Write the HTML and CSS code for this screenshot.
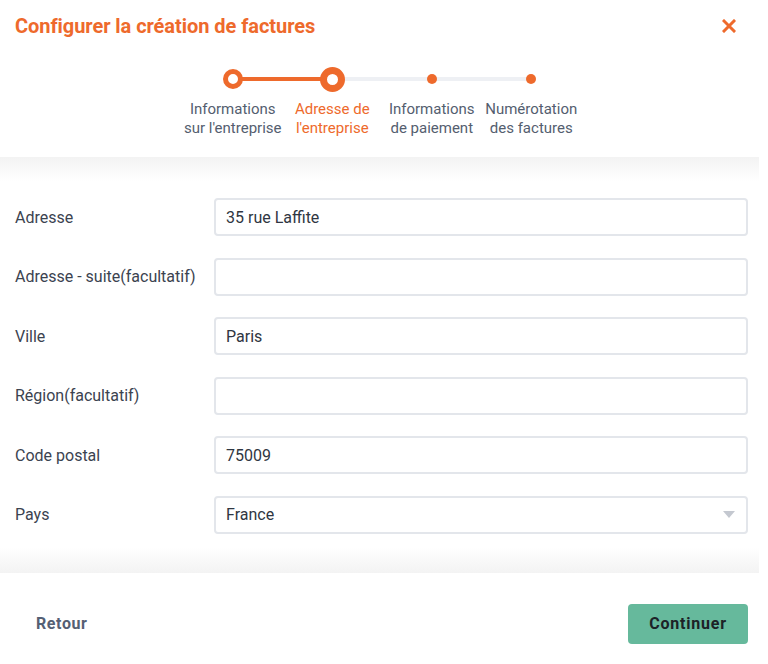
FILE: index.html
```html
<!DOCTYPE html>
<html lang="fr">
<head>
<meta charset="utf-8">
<title>Configurer la création de factures</title>
<link rel="stylesheet" href="styles.css">
</head>
<body>
<div class="modal">
  <header class="modal-header">
    <div class="title-row">
      <h1 class="title">Configurer la création de factures</h1>
      <button class="close" aria-label="Fermer">
        <svg width="14" height="14" viewBox="0 0 14 14"><path d="M2 2 L12 12 M12 2 L2 12" stroke="#ee6a2c" stroke-width="3" stroke-linecap="square"/></svg>
      </button>
    </div>
    <ol class="stepper">
      <li class="step done">
        <div class="node"><span class="dot ring"></span></div>
        <div class="step-label">Informations<br>sur l'entreprise</div>
      </li>
      <li class="step current">
        <div class="node"><span class="dot ring big"></span></div>
        <div class="step-label">Adresse de<br>l'entreprise</div>
      </li>
      <li class="step todo">
        <div class="node"><span class="dot small"></span></div>
        <div class="step-label">Informations<br>de paiement</div>
      </li>
      <li class="step todo last">
        <div class="node"><span class="dot small"></span></div>
        <div class="step-label">Numérotation<br>des factures</div>
      </li>
    </ol>
  </header>

  <main class="modal-body">
    <div class="row">
      <label class="label">Adresse</label>
      <div class="field">35 rue Laffite</div>
    </div>
    <div class="row">
      <label class="label">Adresse - suite(facultatif)</label>
      <div class="field"></div>
    </div>
    <div class="row">
      <label class="label">Ville</label>
      <div class="field">Paris</div>
    </div>
    <div class="row">
      <label class="label">Région(facultatif)</label>
      <div class="field"></div>
    </div>
    <div class="row">
      <label class="label">Code postal</label>
      <div class="field">75009</div>
    </div>
    <div class="row">
      <label class="label">Pays</label>
      <div class="field select">France<span class="caret"></span></div>
    </div>
  </main>

  <footer class="modal-footer">
    <button class="btn-back">Retour</button>
    <button class="btn-next">Continuer</button>
  </footer>
</div>
</body>
</html>
```

FILE: styles.css
```css
* { box-sizing: border-box; }
html, body { margin: 0; padding: 0; background: #fff; }
body {
  font-family: Roboto, "Liberation Sans", Arial, sans-serif;
  color: #3b4350;
}
.modal { width: 759px; background: #fff; }

.modal-header { height: 157px; padding: 12px 11px 0 15px; }
.title-row { display: flex; justify-content: space-between; align-items: center; height: 28px; }
.title {
  margin: 0;
  font-size: 20px;
  font-weight: 700;
  color: #ee6a2c;
  letter-spacing: -0.05px;
}
.close {
  border: 0; background: none; padding: 0; margin-right: 12px;
  width: 14px; height: 14px; display: flex; cursor: pointer;
}

.stepper {
  list-style: none; margin: 26px 0 0; padding: 0 0 0 168px;
  display: flex;
}
.step { width: 99.5px; display: flex; flex-direction: column; align-items: center; }
.node {
  position: relative; width: 100%; height: 26px;
  display: flex; align-items: center; justify-content: center;
}
.node::before, .node::after {
  content: ""; position: absolute; top: 11px; height: 4px; width: 50%;
  background: #eef0f4;
}
.node::before { left: 0; }
.node::after { right: 0; }
.step:first-child .node::before, .step.last .node::after { display: none; }
.step.done .node::after, .step.current .node::before { background: #ee6a2c; }
.dot { position: relative; z-index: 1; border-radius: 50%; background: #ee6a2c; }
.dot.ring { width: 20px; height: 20px; background: #fff; border: 5.5px solid #ee6a2c; }
.dot.ring.big { width: 25px; height: 25px; border-width: 7.5px; }
.dot.small { width: 10px; height: 10px; }

.step-label {
  margin-top: 8px;
  font-size: 15px; line-height: 18.5px; text-align: center;
  color: #545e6f; white-space: nowrap;
}
.step.current .step-label { color: #ee6a2c; }

.modal-body {
  background: linear-gradient(to bottom, #f3f3f3 0px, #fff 24px, #fff calc(100% - 26px), #f3f3f3 100%);
  padding: 41px 11px 39px 15px;
  display: flex; flex-direction: column; gap: 21.6px;
}
.row { display: flex; align-items: center; }
.label { width: 199px; font-size: 16px; color: #3b4350; }
.field {
  flex: 1; height: 38px;
  border: 2px solid #e3e6eb; border-radius: 4px; background: #fff;
  padding: 0 10px; display: flex; align-items: center;
  font-size: 16px; color: #2f3642;
}
.select { justify-content: space-between; }
.caret {
  width: 0; height: 0; margin-right: 1px;
  border-left: 6px solid transparent; border-right: 6px solid transparent;
  border-top: 7px solid #c4c8d0;
}

.modal-footer {
  height: 90px; padding: 31px 11px 0 36px;
  display: flex; justify-content: space-between; align-items: flex-start;
}
.btn-back {
  border: 0; background: none; padding: 0; height: 40px;
  font-family: inherit; font-size: 16px; font-weight: 700; color: #556074;
  letter-spacing: 0.6px; cursor: pointer;
}
.btn-next {
  width: 120px; height: 40px; border: 0; border-radius: 4px;
  background: #66b99c; color: #1c2227;
  font-family: inherit; font-size: 16px; font-weight: 700; letter-spacing: 0.8px;
  cursor: pointer;
}
```
